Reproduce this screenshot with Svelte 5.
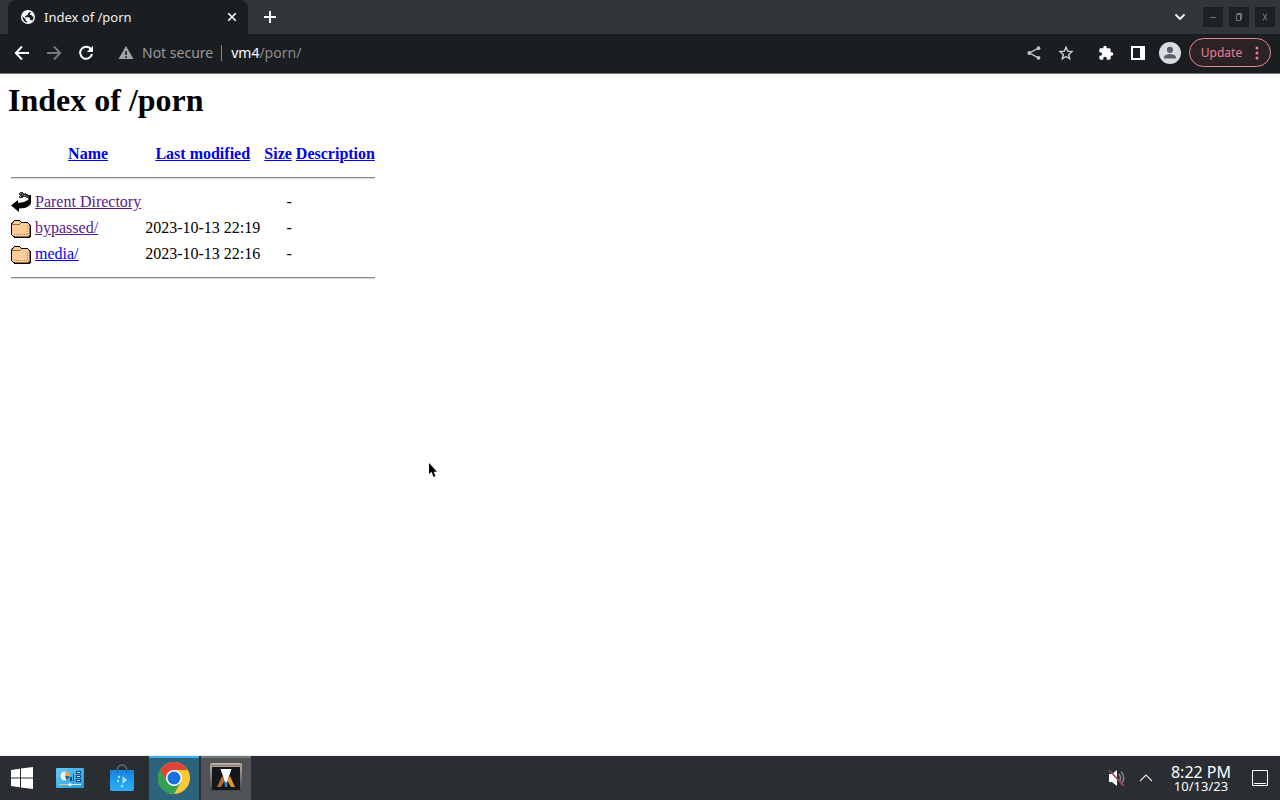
<script>
  const columns = ['Name', 'Last modified', 'Size', 'Description'];
  const rows = [
    { name: 'Parent Directory', date: '', icon: 'back', visited: true },
    { name: 'bypassed/', date: '2023-10-13 22:19', icon: 'folder', visited: true },
    { name: 'media/', date: '2023-10-13 22:16', icon: 'folder', visited: false }
  ];
  let url = $state('/porn/');
</script>

<div class="desktop">
  <header class="browser">
    <div class="strip">
      <div class="tab">
        <svg class="globe" width="14" height="14" viewBox="0 0 14 14" aria-hidden="true">
          <circle cx="7" cy="7" r="7" fill="#fff" />
          <path d="M8.500 2L7 3.500v1.300H5.500V6H4v1.300h4L9 8.500V10h1.500l.6 1A5.800 5.800 0 0 0 12.600 6.500h-1.200L10.500 5H9V3.800L10.200 2.600zM1.400 6.300L4.500 9v1.200l1.700 1.300v1A5.600 5.600 0 0 1 1.400 6.300z" fill="#1b1e20" />
        </svg>
        <span class="title">Index of /porn</span>
        <button class="close" aria-label="Close tab">
          <svg width="10" height="10" viewBox="0 0 10 10"><path d="M1.200 1.200l7.600 7.600M8.800 1.200L1.200 8.800" stroke="#fff" stroke-width="1.600" /></svg>
        </button>
      </div>
      <button class="newtab" aria-label="New tab">
        <svg width="14" height="14" viewBox="0 0 14 14"><path d="M7 1v12M1 7h12" stroke="#fff" stroke-width="2" /></svg>
      </button>
      <div class="winctl">
        <button class="search" aria-label="Search tabs">
          <svg width="12" height="8" viewBox="0 0 12 8"><path d="M1.500 1.500L6 6l4.500-4.500" fill="none" stroke="#fff" stroke-width="1.800" /></svg>
        </button>
        <button class="wbtn" aria-label="Minimize"><svg width="10" height="10" viewBox="0 0 10 10"><path d="M2 5.500h6" stroke="#6f7173" /></svg></button>
        <button class="wbtn" aria-label="Restore"><svg width="10" height="10" viewBox="0 0 10 10"><path d="M2.500 2.500h4v6h-4zM3 1.500h4.500v6" fill="none" stroke="#77797b" /></svg></button>
        <button class="wbtn" aria-label="Close"><svg width="10" height="10" viewBox="0 0 10 10"><path d="M3 1.500l4 7M7 1.500l-4 7" stroke="#77797b" /></svg></button>
      </div>
    </div>

    <div class="toolbar">
      <nav class="nav">
        <button aria-label="Back"><svg width="16" height="16" viewBox="0 0 16 16"><path d="M8 1.500L1.800 8 8 14.500M2 8h13" fill="none" stroke="#fff" stroke-width="1.900" /></svg></button>
        <button aria-label="Forward"><svg width="16" height="16" viewBox="0 0 16 16"><path d="M8 1.500L14.200 8 8 14.500M14 8H1" fill="none" stroke="#77797b" stroke-width="1.900" /></svg></button>
        <button aria-label="Reload"><svg width="16" height="16" viewBox="0 0 16 16"><path d="M13.300 4.700A6 6 0 1 0 14 9" fill="none" stroke="#fff" stroke-width="2" /><path d="M15 .8V7H8.800z" fill="#fff" /></svg></button>
      </nav>
      <div class="address">
        <svg width="16" height="14" viewBox="0 0 16 14" aria-hidden="true"><path d="M8 0l7.500 13H.500z" fill="#a3a5a6" /><path d="M7.200 5h1.600v4H7.200zM7.200 10.300h1.600v1.700H7.200z" fill="#1b1e20" /></svg>
        <span class="secure">Not secure</span>
        <label class="host" for="url">vm4</label>
        <input id="url" bind:value={url} />
      </div>
      <div class="actions">
        <button aria-label="Share"><svg width="16" height="16" viewBox="0 0 16 16"><path d="M12.500 3.200L3.500 8l9 4.800" fill="none" stroke="#c3c4c5" stroke-width="1.400" /><g fill="#c3c4c5"><circle cx="12.500" cy="3.200" r="1.900" /><circle cx="3.300" cy="8" r="1.900" /><circle cx="12.500" cy="12.800" r="1.900" /></g></svg></button>
        <button aria-label="Bookmark"><svg width="16" height="16" viewBox="0 0 16 16"><path d="M8 2.200l1.700 4 4.300.4-3.300 2.900 1 4.300L8 11.500l-3.700 2.300 1-4.300L2 6.600l4.300-.4z" fill="none" stroke="#d0d1d2" stroke-width="1.400" /></svg></button>
        <button class="ext" aria-label="Extensions"><svg width="16" height="16" viewBox="0 0 24 24"><path d="M20.500 11H19V7a2 2 0 0 0-2-2h-4V3.500a2.500 2.500 0 0 0-5 0V5H4a2 2 0 0 0-2 2v3.800h1.500a2.700 2.700 0 0 1 0 5.400H2V20a2 2 0 0 0 2 2h3.800v-1.500a2.700 2.700 0 0 1 5.400 0V22H17a2 2 0 0 0 2-2v-4h1.500a2.500 2.500 0 0 0 0-5z" fill="#fff" /></svg></button>
        <button aria-label="Side panel"><svg width="16" height="16" viewBox="0 0 16 16"><path d="M1 1h14v14H1zM3 3v10h7V3z" fill="#fff" fill-rule="evenodd" /></svg></button>
        <button class="profile" aria-label="Profile"><svg width="22" height="22" viewBox="0 0 22 22"><circle cx="11" cy="11" r="11" fill="#dadce3" /><circle cx="11" cy="7.800" r="3.100" fill="#5b5e6b" /><path d="M5 16.500v-1.300c0-2.200 4-3.200 6-3.200s6 1 6 3.200v1.300z" fill="#5b5e6b" /></svg></button>
        <button class="update">
          <span>Update</span>
          <svg width="4" height="14" viewBox="0 0 4 14" aria-hidden="true"><g fill="#e87f93"><circle cx="2" cy="2" r="1.500" /><circle cx="2" cy="7" r="1.500" /><circle cx="2" cy="12" r="1.500" /></g></svg>
        </button>
      </div>
    </div>
  </header>

  <main>
    <h1>Index of /porn</h1>
    <table>
      <thead>
        <tr>
          <th class="icon"></th>
          {#each columns as column}
            <th><a href="#top">{column}</a></th>
          {/each}
        </tr>
        <tr><th colspan="5"><hr /></th></tr>
      </thead>
      <tbody>
        {#each rows as row}
          <tr>
            <td class="icon">
              {#if row.icon === 'back'}
                <svg width="20" height="22" viewBox="0 0 20 22" aria-hidden="true">
                  <path d="M9 1h3v1h3v1h2v1h2v3h-4V6h-3v1H8V5h1V4H8V2h1z" fill="#333" />
                  <path d="M9 2h1v1H9zM11 3h1v1h-1zM13 2h1v1h-1zM9 5h1v1H9zM13 4h1v1h-1zM15 5h1v1h-1z" fill="#999" />
                  <path d="M19 4h1v8l-1 2-2 1.500-3 1.500-6 .500V21L0 14.500 7 9v3l6-1 4-2 1-3z" fill="#000" />
                </svg>
              {:else}
                <svg width="20" height="22" viewBox="0 0 20 22" shape-rendering="crispEdges" aria-hidden="true">
                  <path d="M2 4h1V3h6v1h1v1h7v1h1v1h1v1h1v12h-1v1H3v-1H2v-1H1v-1H0V6h1V5h1z" fill="#000" />
                  <path d="M3 4h6v1h1v1h7v1h1v11h-1v1H2v-1H1V6h1V5h1z" fill="#ffcc99" />
                  <path d="M1 8h8V7h1V6H9v1H2V6h1V5H2v1H1zM18 8h1v11h-1v1H4v-1h13v-1h1z" fill="#996b42" />
                  <path d="M3 17h1v1H3zM5 17h1v1H5zM7 17h1v1H7zM9 17h1v1H9zM11 17h1v1h-1zM13 17h1v1h-1zM15 17h1v1h-1zM16 8h1v1h-1zM16 10h1v1h-1zM16 12h1v1h-1zM16 14h1v1h-1zM16 16h1v1h-1z" fill="#b98048" />
                </svg>
              {/if}
            </td>
            <td><a href="#top" class:visited={row.visited}>{row.name}</a></td>
            <td class="right">{row.date}</td>
            <td class="right">-</td>
            <td></td>
          </tr>
        {/each}
        <tr><th colspan="5"><hr /></th></tr>
      </tbody>
    </table>
  </main>

  <footer class="taskbar">
    <button class="task start" aria-label="Start"><svg width="22" height="22" viewBox="0 0 22 22"><path d="M0 3l9-1.300v8.800H0zM10 1.500L22 0v10.500H10zM0 11.500h9v8.700L0 19zM10 11.500h12V22l-12-1.600z" fill="#fff" /></svg></button>
    <button class="task" aria-label="Settings">
      <svg width="28" height="20" viewBox="0 0 28 20"><defs><linearGradient id="panel" x2="1" y2="1"><stop stop-color="#64c8f4" /><stop offset="1" stop-color="#249bdf" /></linearGradient></defs><rect width="28" height="20" rx="1" fill="url(#panel)" /><circle cx="9" cy="8" r="4.500" fill="#f2f8fb" /><path d="M9 8V3.500a4.500 4.500 0 0 1 4.500 4.500z" fill="#f4a640" /><path d="M9 8h4.500a4.500 4.500 0 0 1-3 4.200z" fill="#176ca7" /><g fill="#124972"><path d="M14 9h2v4h-2zM17 6h1v7h-1zM20 3h5v3h-5zM20 7h5v3h-5zM20 11h5v3h-5z" /></g><path d="M21 4h3v1h-3zM21 8h3v1h-3zM21 12h3v1h-3z" fill="#b8ecff" /><path d="M3 16.500h22" stroke="#caf1ff" /><path d="M3 16.500h10" stroke="#e3ca72" /><circle cx="14" cy="16.500" r="1.500" fill="#fff" /></svg>
    </button>
    <button class="task" aria-label="Discover">
      <svg width="24" height="28" viewBox="0 0 24 28"><defs><linearGradient id="bag" x2="0" y2="1"><stop stop-color="#1684dc" /><stop offset="1" stop-color="#2bb0f6" /></linearGradient></defs><path d="M7.500 9V5.500a4.500 4.500 0 0 1 9 0V9" fill="none" stroke="#56707e" stroke-width="1.500" /><path d="M0 6h24v19a2 2 0 0 1-2 2H2a2 2 0 0 1-2-2z" fill="url(#bag)" /><path d="M7.500 6v3M16.500 6v3" stroke="#0e5c9c" /><path d="M12.500 12l4.500 4-4.500 4z" fill="#a8e2ff" /><g fill="#a8e2ff"><circle cx="9" cy="13" r="1.200" /><circle cx="8" cy="17" r="1.200" /><circle cx="12" cy="22" r="1.200" /></g></svg>
    </button>
    <button class="task chrome" aria-label="Chrome">
      <svg width="32" height="32" viewBox="0 0 32 32"><circle cx="16" cy="16" r="16" fill="#fcc934" /><path d="M16 16L2.144 8A16 16 0 0 0 16 32l7-12z" fill="#34a053" /><path d="M2.144 8A16 16 0 0 1 29.856 8H16l-7 12z" fill="#df4437" /><path d="M2.144 8L9 20l7 4-4.600 7.350A16 16 0 0 1 2.144 8z" fill="#34a053" /><circle cx="16" cy="16" r="8" fill="#fff" /><circle cx="16" cy="16" r="6.500" fill="#1a6fe0" /></svg>
    </button>
    <button class="task app" aria-label="Application">
      <svg width="32" height="30" viewBox="0 0 32 30"><defs><linearGradient id="frame" x2="0" y2="1"><stop stop-color="#c0b0a4" /><stop offset="1" stop-color="#454749" /></linearGradient></defs><rect width="32" height="28" rx="2" fill="url(#frame)" /><path d="M1 2.500h30" stroke="#8d725f" /><rect x="2" y="4" width="28" height="23" fill="#11171b" /><path d="M12 13L7 24h4l4-7z" fill="#b9652d" /><path d="M20 13l5 11h-4l-4-7z" fill="#ec922e" /><path d="M14 16h4l-1 8h-2z" fill="#238acb" /><path d="M10.500 6h11L17 19h-2z" fill="#fff" /></svg>
    </button>
    <div class="tray">
      <button class="mute" aria-label="Muted"><svg width="18" height="18" viewBox="0 0 18 18"><path d="M1 5h3l5-4v16l-5-4H1z" fill="#fff" /><path d="M11 5q3 4 0 8M13 2.500q5.500 6.500 0 13" fill="none" stroke="#85888b" stroke-width="1.500" /><path d="M1 1l15 16" stroke="#9b465a" stroke-width="1.600" /></svg></button>
      <button class="up" aria-label="Show hidden icons"><svg width="14" height="8" viewBox="0 0 14 8"><path d="M1 7l6-6 6 6" fill="none" stroke="#e3e4e5" stroke-width="1.200" /></svg></button>
      <time class="clock"><span>8:22 PM</span><small>10/13/23</small></time>
      <button class="show" aria-label="Show desktop"><svg width="16" height="16" viewBox="0 0 16 16"><path d="M.500 .500h15v15H.500zM2 13.500h12" fill="none" stroke="#fff" /></svg></button>
    </div>
  </footer>

  <svg class="cursor" width="10" height="16" viewBox="0 0 10 16" aria-hidden="true"><path d="M1 1v11l2.500-2.300L5.500 15l2-.9-1.800-4.400H9z" fill="#000" /></svg>
</div>

<style>
  :global(body) { margin: 0; background: #fff; }
  .desktop { position: relative; display: flex; flex-direction: column; min-height: 100vh; }
  button { display: flex; align-items: center; justify-content: center; padding: 0; border: 0; background: none; font: inherit; color: inherit; }
  svg { display: block; flex: none; }

  .browser { font-family: "Noto Sans", sans-serif; font-size: 14px; color: #fff; }
  .strip { display: flex; align-items: stretch; height: 34px; padding-left: 8px; background: #31363b; }
  .tab { display: flex; align-items: center; width: 240px; box-sizing: border-box; padding: 0 11px 0 13px; border-radius: 8px 8px 0 0; background: #1b1e20; }
  .title { flex: 1; margin-left: 9px; font-size: 13px; color: #eff0f1; }
  .newtab { width: 44px; }
  .winctl { display: flex; align-items: center; gap: 6px; margin-left: auto; padding-right: 5px; }
  .search { width: 30px; height: 20px; margin-right: 2px; }
  .wbtn { width: 20px; height: 20px; background: #1e2123; }
  .toolbar { display: flex; align-items: center; height: 37px; padding: 0 9px 2px 8px; border-bottom: 1px solid #777; background: #1b1e20; }
  .nav { display: flex; gap: 4px; }
  .nav button { width: 28px; height: 28px; }
  .address { display: flex; flex: 1; align-items: center; min-width: 0; margin-left: 18px; }
  .secure { margin-left: 8px; padding-right: 8px; border-right: 1px solid #85888a; color: #97999b; line-height: 16px; white-space: nowrap; }
  .host { margin-left: 9px; color: #fff; }
  .address input { flex: 1; min-width: 0; padding: 0; border: 0; outline: 0; background: none; font: inherit; color: #88898b; }
  .actions { display: flex; align-items: center; }
  .actions button { width: 32px; height: 28px; }
  .actions .ext { margin-left: 8px; }
  .actions .update { gap: 13px; width: 82px; height: 29px; margin-left: 3px; box-sizing: border-box; border: 1px solid #e58a9b; border-radius: 15px; background: #2b2226; color: #e87f93; font-size: 12px; }

  main { flex: 1; padding: 8px; font-family: "Liberation Serif", serif; font-size: 16px; line-height: 18px; color: #000; }
  h1 { margin: 0 0 21px; font-size: 32px; line-height: 37px; }
  table { border-spacing: 2px; }
  th, td { padding: 1px; vertical-align: middle; }
  .icon { width: 20px; height: 22px; }
  .right { text-align: right; }
  a { color: #0000ee; }
  a.visited { color: #551a8b; }
  hr { height: 0; margin: 8px 0; border: 0; border-top: 1px solid #8c8c8c; border-bottom: 1px solid #d8d8d8; }

  .taskbar { display: flex; height: 44px; border-top: 1px solid #eceeee; background: #2a2e32; color: #fcfcfc; font-family: "Noto Sans", sans-serif; }
  .task { width: 50px; margin-right: 2px; }
  .task.start { width: 44px; margin-right: 1px; }
  .task.chrome { background: #2c647e; box-shadow: inset 0 2px #3daee9; }
  .task.app { background: #505355; box-shadow: inset 0 2px #707577; }
  .tray { display: flex; align-items: center; margin-left: auto; padding-right: 12px; }
  .mute { width: 28px; height: 32px; }
  .up { width: 30px; height: 32px; }
  .clock { display: flex; flex-direction: column; align-items: center; width: 80px; font-size: 16px; line-height: 16px; }
  .clock small { font-size: 13px; line-height: 13px; }
  .show { width: 16px; height: 32px; margin-left: 11px; }

  .cursor { position: absolute; left: 428px; top: 462px; }
</style>
